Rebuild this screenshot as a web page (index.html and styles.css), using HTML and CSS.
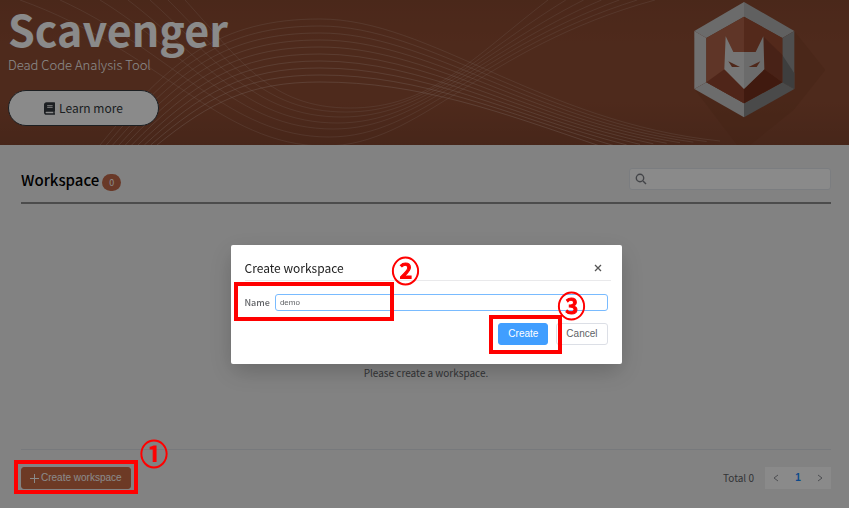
FILE: index.html
```html
<!DOCTYPE html>
<html lang="en">
<head>
<meta charset="utf-8">
<title>Scavenger</title>
<link rel="stylesheet" href="styles.css">
</head>
<body>
<div class="page">
  <header class="banner">
    <svg class="waves" viewBox="0 0 849 145" preserveAspectRatio="xMidYMid slice" aria-hidden="true">
      <g id="arch"></g>
      <g id="trough"></g>
    </svg>
    <div class="intro">
      <h1>Scavenger</h1>
      <p>Dead Code Analysis Tool</p>
      <a class="learn" href="#docs">
        <svg width="11" height="13" viewBox="0 0 448 512" aria-hidden="true"><path fill="currentColor" d="M448 360V24c0-13-11-24-24-24H96C43 0 0 43 0 96v320c0 53 43 96 96 96h328c13 0 24-11 24-24v-16c0-8-4-14-9-19-4-15-4-59 0-74 5-4 9-11 9-19zM128 134c0-3 3-6 6-6h212c3 0 6 3 6 6v20c0 3-3 6-6 6H134c-3 0-6-3-6-6zm0 64c0-3 3-6 6-6h212c3 0 6 3 6 6v20c0 3-3 6-6 6H134c-3 0-6-3-6-6zm253 250H96a32 32 0 0 1 0-64h285c-2 17-2 47 0 64z"/></svg>
        Learn more
      </a>
    </div>
    <svg class="logo" viewBox="155 0 400 435" aria-hidden="true">
      <path fill="#7c4028" opacity=".4" d="M462 93L555 210 460 330 330 435H290L162 267z"/>
      <path fill="#c6c6c6" d="M311 6V50L198 114 162 93z"/>
      <path fill="#b2b2b2" d="M311 6V50L426 114 462 93z"/>
      <path fill="#d0d0d0" d="M162 93L198 114V247L162 267z"/>
      <path fill="#929292" d="M462 93L426 114V247L462 267z"/>
      <path fill="#c8c8c8" d="M162 267L198 247 311 310V352z"/>
      <path fill="#898989" d="M462 267L426 247 311 310V352z"/>
      <path fill="#737373" d="M426 165L462 220V267L426 247z"/>
      <path fill="#af6348" d="M311 50V310L198 247V114z"/>
      <path fill="#994c32" d="M311 50V310L426 247V114z"/>
      <path fill="#86402b" d="M370 110L426 165V247L372 208z"/>
      <path fill="#93452f" d="M198 247L252 208 311 267V310z"/>
      <path fill="#76301c" d="M426 247L372 208 311 267V310z"/>
      <path fill="#dadada" d="M256 109L279 156H311V267L252 208z"/>
      <path fill="#c6c6c6" d="M369 109L346 156H311V267L372 208z"/>
      <path fill="#934a31" d="M264 184L299 201H275zM360 184L325 201H349z"/>
    </svg>
  </header>

  <main class="content">
    <div class="heading">
      <h2>Workspace <span class="count">0</span></h2>
      <label class="search">
        <svg width="12" height="12" viewBox="0 0 12 12" aria-hidden="true"><circle cx="5" cy="5" r="3.7"/><path d="M8 8L11 11"/></svg>
        <input type="search" aria-label="Search workspaces">
      </label>
    </div>
    <p class="empty">Please create a workspace.</p>
    <footer class="bottom">
      <button class="btn add" type="button">
        <svg width="9" height="9" viewBox="0 0 9 9" aria-hidden="true"><path d="M4.500 0V9M0 4.500H9"/></svg>
        Create workspace
      </button>
      <nav class="pager" aria-label="Pages">
        <span>Total 0</span>
        <div class="pages">
          <button type="button" aria-label="Previous"><svg width="6" height="8" viewBox="0 0 6 8"><path d="M5 1L1 4 5 7"/></svg></button>
          <button type="button" class="current">1</button>
          <button type="button" aria-label="Next"><svg width="6" height="8" viewBox="0 0 6 8"><path d="M1 1L5 4 1 7"/></svg></button>
        </div>
      </nav>
    </footer>
  </main>
</div>

<div class="overlay">
  <form class="dialog" role="dialog" aria-labelledby="dialog-title">
    <div class="dialog-head">
      <h3 id="dialog-title">Create workspace</h3>
      <button class="close" type="button" aria-label="Close"><svg width="8" height="8" viewBox="0 0 8 8"><path d="M1 1L7 7M7 1L1 7"/></svg></button>
    </div>
    <div class="field">
      <label for="name">Name</label>
      <input id="name" type="text" value="demo">
      <span class="mark mark-name"><b>②</b></span>
    </div>
    <div class="actions">
      <button class="btn primary" type="button">Create</button>
      <button class="btn" type="button">Cancel</button>
      <span class="mark mark-create"><b>③</b></span>
    </div>
  </form>
</div>
<span class="mark mark-add"><b>①</b></span>
<script src="waves.js"></script>
</body>
</html>
```
FILE: styles.css
```css
* { box-sizing: border-box; }

body {
  margin: 0;
  font: 13px/20px "Noto Sans CJK KR", "Noto Sans", sans-serif;
  color: #606266;
  background: #f1f1f1;
}

h1, h2, h3, p { margin: 0; }
button, input { font: 12px/16px "Liberation Sans", Arial, sans-serif; }

.page {
  display: flex;
  flex-direction: column;
  min-height: 100vh;
}

.banner {
  position: relative;
  display: flex;
  justify-content: space-between;
  height: 145px;
  padding: 0 24px 0 8px;
  background: linear-gradient(#8a4a31, #914e34 30%, #914e34 70%, #844730);
}

.waves {
  position: absolute;
  inset: 0;
  width: 100%;
  height: 100%;
  fill: none;
  stroke: #d9b9aa;
}

.intro { position: relative; }

h1 {
  font-size: 43px;
  line-height: 56px;
  font-weight: 700;
  color: #fff;
}

.intro p {
  font-size: 13px;
  line-height: 18px;
  color: #fff;
  font-weight: 300;
}

.learn {
  display: flex;
  align-items: center;
  justify-content: center;
  gap: 4px;
  width: 151px;
  height: 36px;
  margin-top: 16px;
  border: 1px solid #343a40;
  border-radius: 18px;
  background: #fff;
  color: #343a40;
  font-size: 12px;
  text-decoration: none;
}

.logo {
  position: relative;
  height: 145px;
}

.content {
  flex: 1;
  display: flex;
  flex-direction: column;
  padding: 20px 18px 19px 21px;
}

.heading {
  display: flex;
  align-items: center;
  justify-content: space-between;
  padding: 2px 0 11px;
  border-bottom: 2px solid #8c8c8c;
}

h2 {
  display: flex;
  align-items: center;
  gap: 3px;
  padding-top: 2px;
  font-size: 15px;
  line-height: 22px;
  font-weight: 500;
  color: #000;
}

.count {
  width: 19px;
  margin-top: 4px;
  border-radius: 9px;
  background: #c2694a;
  color: #fff;
  font-size: 9px;
  line-height: 17px;
  font-weight: 400;
  text-align: center;
}

.search {
  display: flex;
  align-items: center;
  gap: 6px;
  width: 202px;
  height: 22px;
  padding: 0 5px;
  border: 1px solid #e4e7ed;
  border-radius: 3px;
  background: #fff;
}

.search svg { fill: none; stroke: #7c7f85; stroke-width: 1.4; }

.search input {
  flex: 1;
  min-width: 0;
  border: 0;
  outline: 0;
  background: none;
}

.empty {
  flex: 1;
  display: flex;
  align-items: center;
  justify-content: center;
  padding-top: 92px;
  font-size: 10px;
}

.bottom {
  display: flex;
  align-items: center;
  justify-content: space-between;
  padding-top: 17px;
  border-top: 1px solid #dcdfe6;
}

.btn {
  height: 22px;
  padding: 0 9px;
  border: 1px solid #dcdfe6;
  border-radius: 3px;
  background: #fff;
  color: #606266;
  font-size: 10px;
}

.add {
  display: flex;
  align-items: center;
  gap: 2px;
  padding: 0 8px;
  border-color: #ca6d48;
  background: #c96b45;
  color: #fff;
}

.btn path { stroke: currentColor; }

.pager {
  display: flex;
  align-items: center;
  gap: 11px;
  font-size: 10px;
}

.pages { display: flex; background: #fff; }

.pages button {
  width: 22px;
  height: 22px;
  padding: 0;
  border: 0;
  background: none;
  color: #8e9096;
}

.pages path { fill: none; stroke: currentColor; }
.pages .current { color: #1487ff; font-weight: 700; font-size: 10px; }

.overlay {
  position: fixed;
  inset: 0;
  padding-top: 245px;
  padding-left: 3px;
  background: rgba(0, 0, 0, .46);
}

.dialog {
  width: 46%;
  min-width: 391px;
  margin: 0 auto;
  padding: 10px 14px 19px;
  border-radius: 2px;
  background: #fff;
  box-shadow: 0 8px 24px rgba(0, 0, 0, .2);
}

.dialog-head {
  display: flex;
  align-items: center;
  justify-content: space-between;
  height: 26px;
  margin-right: -3px;
  padding-right: 5px;
  border-bottom: 1px solid #e9e9eb;
}

.dialog-head h3 {
  font-size: 12px;
  line-height: 24px;
  font-weight: 400;
  color: #222;
}

.close {
  display: flex;
  padding: 4px;
  border: 0;
  background: none;
}

.close path { stroke: #555; stroke-width: 1.3; }

.field {
  position: relative;
  display: flex;
  align-items: center;
  gap: 5px;
  margin-top: 13px;
}

.field label {
  font-size: 9px;
  line-height: 16px;
  font-weight: 500;
}

.field input {
  flex: 1;
  height: 17px;
  padding: 0 4px;
  border: 1px solid #79bbff;
  border-radius: 3px;
  outline: 0;
  color: #606266;
  font-size: 8px;
}

.actions {
  position: relative;
  display: flex;
  justify-content: flex-end;
  gap: 8px;
  margin-top: 12px;
}

.primary {
  border-color: #409eff;
  background: #409eff;
  color: #fff;
}

/* Numbered step markers lying over the screen */
.mark {
  position: absolute;
  border: 4px solid #f00;
  color: #f00;
  pointer-events: none;
}

.mark b {
  position: absolute;
  font-size: 28px;
  line-height: 30px;
  font-weight: 500;
  -webkit-text-stroke: 1px #f00;
}

.mark-name { left: -11px; top: -12px; width: 160px; height: 39px; }
.mark-name b { left: 154px; top: -31px; }
.mark-create { right: 46px; top: -8px; width: 73px; height: 39px; }
.mark-create b { left: 65px; top: -29px; }
.mark-add { position: fixed; left: 14px; bottom: 14px; width: 124px; height: 34px; }
.mark-add b { left: 122px; top: -26px; }
```
FILE: waves.js
```js
const NS = "http://www.w3.org/2000/svg";

function line(group, d, opacity) {
  const path = document.createElementNS(NS, "path");
  path.setAttribute("d", d);
  path.setAttribute("opacity", opacity);
  document.getElementById(group).append(path);
}

const mix = (a, b, t) => a + (b - a) * t;

for (let i = 0; i < 10; i++) {
  const t = i / 9;
  line("arch",
    `M${mix(100, 157, t)} 145C${mix(170, 210, t)} ${mix(60, 102, t)} ${mix(220, 250, t)} ${mix(19, 82, t)} 320 ${mix(19, 82, t)}` +
    `C${mix(430, 420, t)} ${mix(19, 82, t)} ${mix(540, 500, t)} ${mix(122, 112, t)} ${mix(720, 600, t)} ${mix(141, 146, t)}`,
    mix(0.26, 0.38, t));
}

const starts = [185, 168, 150, 128, 100, 60, 20];
const lows = [108, 112, 117, 123, 129, 137, 146];
lows.forEach((y, i) => {
  const t = i / 6;
  line("trough",
    `M${starts[i]} 0C${mix(240, 160, t)} ${mix(60, 50, t)} ${mix(270, 220, t)} ${y} ${mix(350, 325, t)} ${y}` +
    `C${mix(430, 420, t)} ${y} ${mix(470, 480, t)} ${mix(60, 48, t)} ${mix(548, 655, t)} 0`,
    0.24);
});
```
